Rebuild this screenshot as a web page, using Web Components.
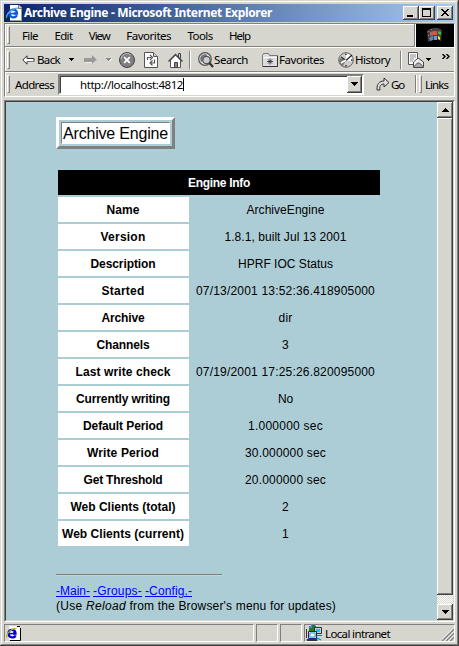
<!DOCTYPE html>
<html lang="en"><head><meta charset="utf-8"><title>Archive Engine</title>
<style>
html,body{margin:0;height:646px;overflow:hidden;background:#d6d5ce}
</style></head><body>
<ie-window></ie-window>
<script>
const define=(name,html,after)=>customElements.define(name,class extends HTMLElement{
  connectedCallback(){
    if(!this.shadowRoot){this.attachShadow({mode:'open'}).innerHTML=html;}
    if(after)after(this);
  }
});

/* Text run whose letter spacing is adjusted to fill the width given in "w". */
define('fit-text','<style>:host{display:inline-block;white-space:pre;flex:none;overflow:visible}span{display:inline-block;white-space:pre}:host([u]) span{text-decoration:underline}</style><span><slot></slot></span>',el=>{
  const w=+el.getAttribute('w');if(!w)return;
  const s=el.shadowRoot.querySelector('span');
  el.style.width=w+'px';
  const n=el.textContent.length;
  s.style.letterSpacing=((w-s.getBoundingClientRect().width)/n)+'px';
});

const icons={
page:[16,16,`<path d="M4 0h9l3 3v13H4z" fill="#fff"/><path d="M15.500 4v11.500H4" fill="none" stroke="#999"/><path d="M12.500 0v3.500H16" fill="#ccc" stroke="#777"/><path d="M7.500 8.500h3.500C11 3.500 3.500 3 3.500 8.300c0 5 6 5 7.500 2" fill="none" stroke="#1058d8" stroke-width="2.300"/><path d="M3.500 8.600h7" stroke="#1058d8" stroke-width="1.500"/><path d="M.7 12.800C-.5 9 8 2 12 3.300" fill="none" stroke="#58a8e8" stroke-width="1.400"/>`],
page2:[16,16,`<path d="M3 1h9l3 3v11H3z" fill="#fff"/><path d="M14.500 3v12.500H4M11 1.500h3" fill="none" stroke="#000"/><path d="M7 8.500h2.500C9.500 4 2.500 3.500 2.500 8.300c0 5 6 5 7 2" fill="none" stroke="#0000d0" stroke-width="2.300"/><path d="M3 8.600h7" stroke="#0000d0" stroke-width="1.500"/><path d="M.7 12.500C-.5 9 7 2 10.500 3.800" fill="none" stroke="#c8b800" stroke-width="1.200"/>`],
min:[16,14,`<path d="M4 9h6v2H4z"/>`],
max:[16,14,`<path d="M3 2h9v9H3zM4 4v6h7V4z" fill-rule="evenodd"/>`],
close:[16,14,`<path d="M4 3h2v1h1v1h2V4h1V3h2v1h-1v1h-1v1H9v1h1v1h1v1h1v1h-2V9H9V8H7v1H6v1H4V9h1V8h1V7h1V6H6V5H5V4H4z"/>`],
back:[13,10,`<path d="M5 .8v2.700h7v3H5v2.700L.8 5z" fill="#fff" stroke="#333"/><path d="M5 6.500h7" stroke="#777"/>`],
fwd:[13,10,`<path d="M8 0v3H0v4h8v3l5-5z" fill="#999"/><path d="M1 7.500h7M8 9.500l4-4" stroke="#fff" fill="none" stroke-width=".7"/>`],
stop:[16,16,`<circle cx="8" cy="8" r="7.500" fill="#808080" stroke="#444"/><path d="M2 7a6 6 0 0 1 10-4" stroke="#bbb" fill="none"/><path d="M5.200 5.200l5.600 5.600m0-5.600l-5.600 5.600" stroke="#fff" stroke-width="1.800"/>`],
refresh:[14,16,`<path d="M.5.500h9l4 4v11H.5z" fill="#fff" stroke="#555"/><path d="M9.500.500v4h4" fill="#ccc" stroke="#555"/><path d="M3.500 8V5.500h3.500M6 3l2.500 2.500L6 8M10.500 7.500V11H7M8.500 8.500L6 11l2.500 2.500" fill="none" stroke="#555" stroke-width="1.200"/>`],
home:[15,16,`<path d="M10.500 1.500h2v5h-2z" fill="#ccc" stroke="#444"/><path d="M2.500 8v7.500h10V8L7.500 3z" fill="#fff" stroke="#555"/><path d="M.5 9.500l7-7 7 7" fill="none" stroke="#444" stroke-width="1.300"/><path d="M6.500 10.500h3v5h-3z" fill="#888" stroke="#444"/>`],
search:[16,16,`<circle cx="7" cy="7" r="6.300" fill="#ddd" stroke="#555" stroke-width="1.200"/><path d="M2 6l2-3 4-1 1 2-3 1-1 4-2 1z" fill="#777"/><circle cx="8.500" cy="8" r="3.700" fill="#ccc" stroke="#555" stroke-width="1.200"/><path d="M11.300 10.800l3.700 4.200" stroke="#333" stroke-width="2.300"/>`],
fav:[16,14,`<path d="M.5 2.500l1-2h5l1 2h8v11H.5z" fill="#ddd" stroke="#777"/><path d="M15.500 3v10.500H1" stroke="#333" fill="none"/><path d="M1 4.500h14" stroke="#fff"/><path d="M8 5.500v6M5 8.500h6M6 6.500l4 4m0-4l-4 4" stroke="#333" stroke-width=".9"/>`],
hist:[16,16,`<circle cx="8" cy="8" r="7.300" fill="#ccc" stroke="#666"/><path d="M8 8V1.500a6.500 6.500 0 0 1 6 8z" fill="#fff"/><path d="M1.500 6L8 8l-3 6A7 7 0 0 1 1.500 6z" fill="#777"/><path d="M3 5l5 3.500L14 3M8 1.500v1.500M8 13v1.500M13 8h1.500" fill="none" stroke="#222" stroke-width="1.300"/><path d="M3 11l5-3" stroke="#fff" stroke-width="1.500"/>`],
mail:[16,16,`<path d="M.5.500h9v12h-9z" fill="#fff" stroke="#555"/><path d="M2 3h6M2 5h6M2 7h4M2 9h3" stroke="#888"/><path d="M5.500 10L10 6l5.500 4v5.500h-10z" fill="#eee" stroke="#444"/><path d="M5.500 15l4-4h2l4 4" fill="#aaa" stroke="#555"/>`],
go:[14,14,`<path d="M1 13C.5 7 3.500 4 8 4V1l5 4.500L8 10V7C5 7 3 9 4 13z" fill="#ddd" stroke="#333"/>`],
down:[7,4,`<path d="M0 0h7v1H6v1H5v1H4v1H3V3H2V2H1V1H0z"/>`],
downs:[5,3,`<path d="M0 0h5v1H4v1H3v1H2V2H1V1H0z"/>`],
downg:[6,4,`<path d="M0 0h5v1H4v1H3v1H2V2H1V1H0z" fill="#888"/><path d="M3 3h1V2h1V1h1" stroke="#fff" fill="none" stroke-width=".6"/>`],
up:[7,4,`<path d="M3 0h1v1h1v1h1v1h1v1H0V3h1V2h1V1h1z"/>`],
more:[8,5,`<path d="M.5 0l2.500 2.500L.5 5M4.500 0L7 2.500 4.500 5" fill="none" stroke="#000" stroke-width="1.400"/>`],
flag:[18,16,`<path d="M1 4l3-2 4-1 4 0 4 2-1 11-4-2-4 1-5 2z" fill="#444"/><path d="M2 4h1v1H2zm0 4h1v1H2zm1 3h1v1H3zM5 2h1v1H5z" fill="#b77"/><path d="M4 5l4-1v4l-4 1z" fill="#b76060"/><path d="M4 10l3-1v4l-3 1z" fill="#58b"/><path d="M8 4h3v4H8z" fill="#f42"/><path d="M8 9h3v4H8z" fill="#69d"/><path d="M12 4l3 1v3l-3-1z" fill="#3b4"/><path d="M12 9l2 1v3l-2-1z" fill="#fd2"/>`],
net:[16,16,`<path d="M3 2l3-2h3l2 3-3 3H3z" fill="#208020"/><path d="M3 1h3v2H3z" fill="#4080f0"/><path d="M8.500 2.500h7v6h-7z" fill="#ccc" stroke="#333"/><path d="M10 4h4v3h-4z" fill="#18c8e8"/><path d="M2.500 6.500h8v7h-8z" fill="#ddd" stroke="#202080"/><path d="M4 8h5v4H4z" fill="#fff" stroke="#18a8e8"/><path d="M1 14.500h10v1H1z" fill="#ddd" stroke="#333"/><path d="M11 10.500h5M11 13l4 2" stroke="#0088b0" stroke-width="1.200"/><path d="M.5 4v9" stroke="#333"/>`],
grip:[12,12,`<path d="M0 12L12 0M4 12l8-8M8 12l4-4" stroke="#808080" stroke-width="1.700"/><path d="M-1 11.500L11 -.5M2.500 12l9.500-9.500M6.500 12L12 6.500" stroke="#fff"/>`]
};
define('ie-icon','<style>:host{display:block;flex:none;line-height:0}svg{display:block}</style><div></div>',el=>{
  const [w,h,p]=icons[el.getAttribute('n')];
  el.shadowRoot.querySelector('div').innerHTML=`<svg width="${w}" height="${h}" viewBox="0 0 ${w} ${h}">${p}</svg>`;
});
define('win-button',`<style>:host{display:block;box-sizing:border-box;width:16px;height:14px;background:#d6d5ce;box-shadow:inset -1px -1px #404040,inset 1px 1px #fff,inset -2px -2px #808080}</style><slot></slot>`);
define('bar-grip',`<style>:host{display:block;flex:none;box-sizing:border-box;width:3px;height:18px;border:1px solid;border-color:#fff #808080 #808080 #fff}</style>`);
define('bar-sep',`<style>:host{display:block;flex:none;width:1px;height:18px;background:#808080;border-right:1px solid #fff}</style>`);

define('title-bar',`<style>
:host{display:flex;align-items:center;box-sizing:border-box;height:18px;padding:0 2px;background:linear-gradient(90deg,#0a246a,#a6caf0);color:#fff;font:bold 12px/16px "Noto Sans","DejaVu Sans",sans-serif}
fit-text{margin-left:2px}.sp{flex:1}win-button:last-child{margin-left:2px}
</style><ie-icon n="page"></ie-icon><fit-text w="248">Archive Engine - Microsoft Internet Explorer</fit-text><span class="sp"></span>
<win-button><ie-icon n="min"></ie-icon></win-button><win-button><ie-icon n="max"></ie-icon></win-button><win-button><ie-icon n="close"></ie-icon></win-button>`);

define('menu-bar',`<style>
:host{display:flex;height:23px;align-items:center;box-sizing:border-box;padding-left:2px;border-bottom:1px solid #808080}
.m{display:flex;flex:1;gap:16.400px;padding-left:12px}.f{width:38px;height:23px;background:#000;border-left:1px solid #fff;box-shadow:-1px 0 #808080;display:grid;place-items:center}
</style><bar-grip></bar-grip><div class="m"><fit-text w="16">File</fit-text><fit-text w="18">Edit</fit-text><fit-text w="21">View</fit-text><fit-text w="45">Favorites</fit-text><fit-text w="25">Tools</fit-text><fit-text w="21">Help</fit-text></div><div class="f"><ie-icon n="flag"></ie-icon></div>`);

define('tool-bar',`<style>
:host{display:flex;height:25px;align-items:center;box-sizing:border-box;padding-left:2px;border-top:1px solid #fff;border-bottom:1px solid #808080}
ie-icon,fit-text,bar-sep{margin-left:var(--g)}
</style><bar-grip></bar-grip><ie-icon n="back" style="--g:12px"></ie-icon><fit-text w="23" style="--g:2px">Back</fit-text><ie-icon n="downs" style="--g:9px"></ie-icon>
<ie-icon n="fwd" style="--g:10px"></ie-icon><ie-icon n="downg" style="--g:9px"></ie-icon><ie-icon n="stop" style="--g:7px"></ie-icon><ie-icon n="refresh" style="--g:9px"></ie-icon><ie-icon n="home" style="--g:10px"></ie-icon><bar-sep style="--g:6px"></bar-sep>
<ie-icon n="search" style="--g:7px"></ie-icon><fit-text w="34" style="--g:0px">Search</fit-text><ie-icon n="fav" style="--g:14px"></ie-icon><fit-text w="45" style="--g:1px">Favorites</fit-text><ie-icon n="hist" style="--g:14px"></ie-icon><fit-text w="35" style="--g:1px">History</fit-text><bar-sep style="--g:10px"></bar-sep><ie-icon n="mail" style="--g:6px"></ie-icon><ie-icon n="downs" style="--g:2px"></ie-icon><ie-icon n="more" style="--g:11px;align-self:flex-start;margin-top:6px"></ie-icon>`);

define('address-bar',`<style>
:host{display:flex;height:23px;align-items:center;box-sizing:border-box;padding-left:2px;border-top:1px solid #fff}
.in{display:flex;align-items:center;box-sizing:border-box;width:306px;height:21px;margin-left:4px;background:#fff;border:2px solid;border-color:#808080 #fff #fff #808080;box-shadow:inset 1px 1px #404040;padding-left:20px}
.in i{width:1px;height:13px;background:#000}.in span{flex:1}
.in win-button{width:15px;height:17px;display:grid;place-items:center}
</style><bar-grip></bar-grip><fit-text w="39" style="margin-left:5px">Address</fit-text><div class="in"><fit-text w="103">http://localhost:4812</fit-text><i></i><span></span><win-button><ie-icon n="down"></ie-icon></win-button></div>
<ie-icon n="go" style="margin-left:12px"></ie-icon><fit-text w="13" style="margin-left:1px">Go</fit-text><bar-sep style="margin-left:11px"></bar-sep><bar-grip style="margin-left:2px"></bar-grip><fit-text w="23" style="margin-left:3px">Links</fit-text>`);

define('scroll-bar',`<style>
:host{display:flex;flex-direction:column;width:16px;background:repeating-conic-gradient(#d6d5ce 0 25%,#fff 0 50%) 0 0/2px 2px}
win-button{width:16px;height:16px;display:grid;place-items:center}.t{height:477px;flex:none;margin-bottom:9px}
</style><win-button><ie-icon n="up"></ie-icon></win-button><win-button class="t"></win-button><win-button><ie-icon n="down"></ie-icon></win-button>`);

define('page-title',`<style>
:host{display:block;width:119px;height:32px;box-sizing:border-box;border:3px solid;border-color:#fff #808080 #808080 #fff;padding:2px}
div{box-sizing:border-box;height:22px;background:#fff;border:1px solid;border-color:#808080 #fff #fff #808080;padding-left:1px;font:16px/21px "Liberation Sans",Arial,sans-serif}
</style><div><fit-text w="105">Archive Engine</fit-text></div>`);
customElements.define('info-row',class extends HTMLElement{
  connectedCallback(){
    const a=k=>this.getAttribute(k);
    this.attachShadow({mode:'open'}).innerHTML=`<style>
:host{display:grid;grid-template-columns:131px 189px;gap:2px;height:25px;line-height:26px;text-align:center}
div{height:25px;box-sizing:border-box}
.k{background:#fff;font-weight:bold;padding-right:1px}</style><div class="k"><fit-text w="${a('kw')}">${a('k')}</fit-text></div><div><fit-text w="${a('vw')}">${a('v')}</fit-text></div>`;
  }
});
const rows=[['Name',33,'ArchiveEngine',78],['Version',45,'1.8.1, built Jul 13 2001',122],['Description',65,'HPRF IOC Status',95],['Started',43,'07/13/2001 13:52:36.418905000',179],['Archive',43,'dir',14],['Channels',53,'3',7],['Last write check',95,'07/19/2001 17:25:26.820095000',179],['Currently writing',94,'No',15],['Default Period',80,'1.000000 sec',75],['Write Period',72,'30.000000 sec',81],['Get Threshold',79,'20.000000 sec',81],['Web Clients (total)',105,'2',7],['Web Clients (current)',122,'1',7]];
define('info-table',`<style>
:host{display:flex;flex-direction:column;gap:2px;width:322px}
.h{height:25px;line-height:27px;background:#000;color:#fff;font-weight:bold;text-align:center}
</style><div class="h"><fit-text w="62">Engine Info</fit-text></div>${rows.map(r=>`<info-row k="${r[0]}" kw="${r[1]}" v="${r[2]}" vw="${r[3]}"></info-row>`).join('')}`);
define('web-page',`<style>
:host{display:block;flex:1;background:#adcdd6;padding:15px 0 0 50px;font:12px "Liberation Sans",Arial,sans-serif}
info-table{margin:21px 0 0 2px}hr{width:166px;height:2px;box-sizing:border-box;border:0;border-top:1px solid #808080;border-bottom:1px solid #d4d0c8;margin:28px 0 8px}
p{margin:0;height:15px;line-height:15px;display:flex}a{color:#00f}.l{gap:3px}
</style><page-title></page-title><info-table></info-table><hr>
<p class="l"><a><fit-text u w="34">-Main-</fit-text></a><a><fit-text u w="49">-Groups-</fit-text></a><a><fit-text u w="47">-Config.-</fit-text></a></p>
<p><fit-text w="30">(Use </fit-text><i><fit-text w="40">Reload</fit-text></i><fit-text w="210"> from the Browser's menu for updates)</fit-text></p>`);
define('status-bar',`<style>
:host{display:flex;height:18px;gap:2px;margin-top:2px}
div{box-sizing:border-box;height:18px;border:1px solid;border-color:#808080 #fff #fff #808080;display:flex;align-items:center}
.z{flex:1;padding-left:1px}.z span{flex:1}.z ie-icon:last-child{align-self:flex-end}
</style><div style="width:250px;padding-left:1px"><ie-icon n="page2"></ie-icon></div><div style="width:22px"></div><div style="width:22px"></div><div class="z"><ie-icon n="net"></ie-icon><fit-text w="65" style="margin-left:3px">Local intranet</fit-text><span></span><ie-icon n="grip"></ie-icon></div>`);
define('ie-window',`<style>
:host{display:block;box-sizing:border-box;width:459px;height:646px;padding:4px;background:#d6d5ce;box-shadow:inset -1px -1px #404040,inset 1px 1px #d6d5ce,inset -2px -2px #808080,inset 2px 2px #fff;color:#000;font:11.500px/15px "Noto Sans","DejaVu Sans",sans-serif}
.bars{margin-top:1px;box-sizing:border-box;height:74px;border:1px solid;border-color:#808080 #fff #fff #808080;box-shadow:inset 1px 1px #fff}
.view{box-sizing:border-box;height:522px;margin-top:3px;border:1px solid;border-color:#808080 #fff #fff #808080}
.in{display:flex;box-sizing:border-box;height:520px;border:1px solid;border-color:#404040 #d6d5ce #d6d5ce #404040}
</style><title-bar></title-bar><div class="bars"><menu-bar></menu-bar><tool-bar></tool-bar><address-bar></address-bar></div><div class="view"><div class="in"><web-page></web-page><scroll-bar></scroll-bar></div></div><status-bar></status-bar>`);
</script></body></html>
